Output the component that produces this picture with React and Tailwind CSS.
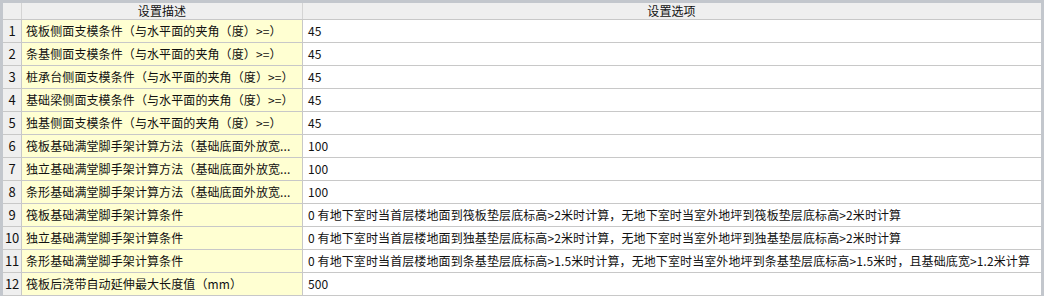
const rows = [
  ['筏板侧面支模条件（与水平面的夹角（度）>=）', '45'],
  ['条基侧面支模条件（与水平面的夹角（度）>=）', '45'],
  ['桩承台侧面支模条件（与水平面的夹角（度）>=）', '45'],
  ['基础梁侧面支模条件（与水平面的夹角（度）>=）', '45'],
  ['独基侧面支模条件（与水平面的夹角（度）>=）', '45'],
  ['筏板基础满堂脚手架计算方法（基础底面外放宽...', '100'],
  ['独立基础满堂脚手架计算方法（基础底面外放宽...', '100'],
  ['条形基础满堂脚手架计算方法（基础底面外放宽...', '100'],
  ['筏板基础满堂脚手架计算条件', '0 有地下室时当首层楼地面到筏板垫层底标高>2米时计算，无地下室时当室外地坪到筏板垫层底标高>2米时计算'],
  ['独立基础满堂脚手架计算条件', '0 有地下室时当首层楼地面到独基垫层底标高>2米时计算，无地下室时当室外地坪到独基垫层底标高>2米时计算'],
  ['条形基础满堂脚手架计算条件', '0 有地下室时当首层楼地面到条基垫层底标高>1.5米时计算，无地下室时当室外地坪到条基垫层底标高>1.5米时，且基础底宽>1.2米计算'],
  ['筏板后浇带自动延伸最大长度值（mm）', '500'],
];

export default function App() {
  return (
    <div
      className="w-[1044px] h-[296px] bg-[#c3c7cd] pt-[3px] pl-[3px] pr-[3px] overflow-hidden text-[12px] tracking-[0.1px] text-[#111]"
      style={{ fontFamily: '"Microsoft YaHei", "Noto Sans CJK SC", sans-serif' }}
    >
      <div className="bg-white h-full">
        {/* header */}
        <div className="grid grid-cols-[19px_281px_1fr] h-[17px] bg-[#efefef] border-b border-[#c8c8c8] leading-[16px]">
          <div className="border-r border-[#d4d4d4]"></div>
          <div className="border-r border-[#d4d4d4] text-center">设置描述</div>
          <div className="text-center mr-[1px]">设置选项</div>
        </div>
        {rows.map((r, i) => (
          <div key={i} className="grid grid-cols-[19px_281px_1fr] h-[23px] border-b border-[#c8c8c8] leading-[22px]">
            <div className="bg-[#efefef] border-r border-[#c8c8c8] text-center text-[13px] tracking-[-0.3px]">{i + 1}</div>
            <div className="bg-[#ffffd2] border-r border-[#c8c8c8] pl-[4px] whitespace-nowrap overflow-hidden">{r[0]}</div>
            <div className="pl-[5px] whitespace-nowrap overflow-hidden mr-[1px]">{r[1]}</div>
          </div>
        ))}
      </div>
    </div>
  );
}
